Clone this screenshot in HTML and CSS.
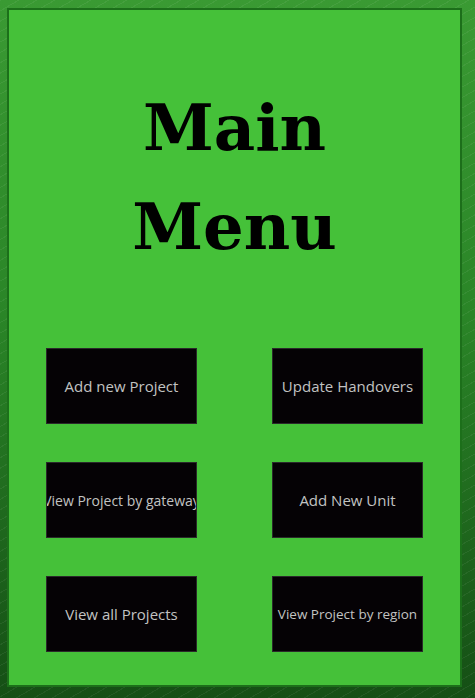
FILE: index.html
```html
<!DOCTYPE html>
<html lang="en">
<head>
  <meta charset="UTF-8">
  <meta name="viewport" content="width=device-width, initial-scale=1.0">
  <title>Main Menu</title>
  <link rel="stylesheet" href="styles.css">
</head>
<body>
  <div class="panel">
    <h1>Main<br>Menu</h1>
    <div class="menu">
      <button>Add new Project</button>
      <button>Update Handovers</button>
      <button class="wide">View Project by gateway</button>
      <button>Add New Unit</button>
      <button>View all Projects</button>
      <button class="small">View Project by region</button>
    </div>
  </div>
</body>
</html>
```
FILE: styles.css
```css
html {
  height: 100%;
}
body {
  margin: 0;
  padding: 8px 13px 11px 7px;
  min-height: 100%;
  box-sizing: border-box;
  background-color: #24721f;
  background-image:
    repeating-linear-gradient(150deg, rgba(255, 255, 255, 0.06) 0 1px, transparent 1px 9px),
    linear-gradient(180deg, #3a9a33 0%, #2a8527 45%, #154f15 100%);
}
.panel {
  background: #45c139;
  border: 2px solid #1c6f1a;
  height: 679px;
  box-sizing: border-box;
  padding-top: 68px;
}
h1 {
  margin: 0;
  text-align: center;
  font-family: "DejaVu Serif", serif;
  font-weight: bold;
  font-size: 64px;
  line-height: 99px;
  color: #000;
}
.menu {
  display: grid;
  grid-template-columns: 151px 151px;
  justify-content: center;
  column-gap: 75px;
  row-gap: 38px;
  margin-top: 72px;
}
.menu button {
  height: 76px;
  padding: 0;
  border: 1px solid #2a2a2a;
  background: #050205;
  color: #c2c2c2;
  font-family: "Open Sans", sans-serif;
  font-size: 15px;
  white-space: nowrap;
  overflow: hidden;
  display: flex;
  align-items: center;
  justify-content: center;
}
.menu button.wide {
  font-size: 14px;
}
.menu button.small {
  font-size: 13.5px;
}
```
